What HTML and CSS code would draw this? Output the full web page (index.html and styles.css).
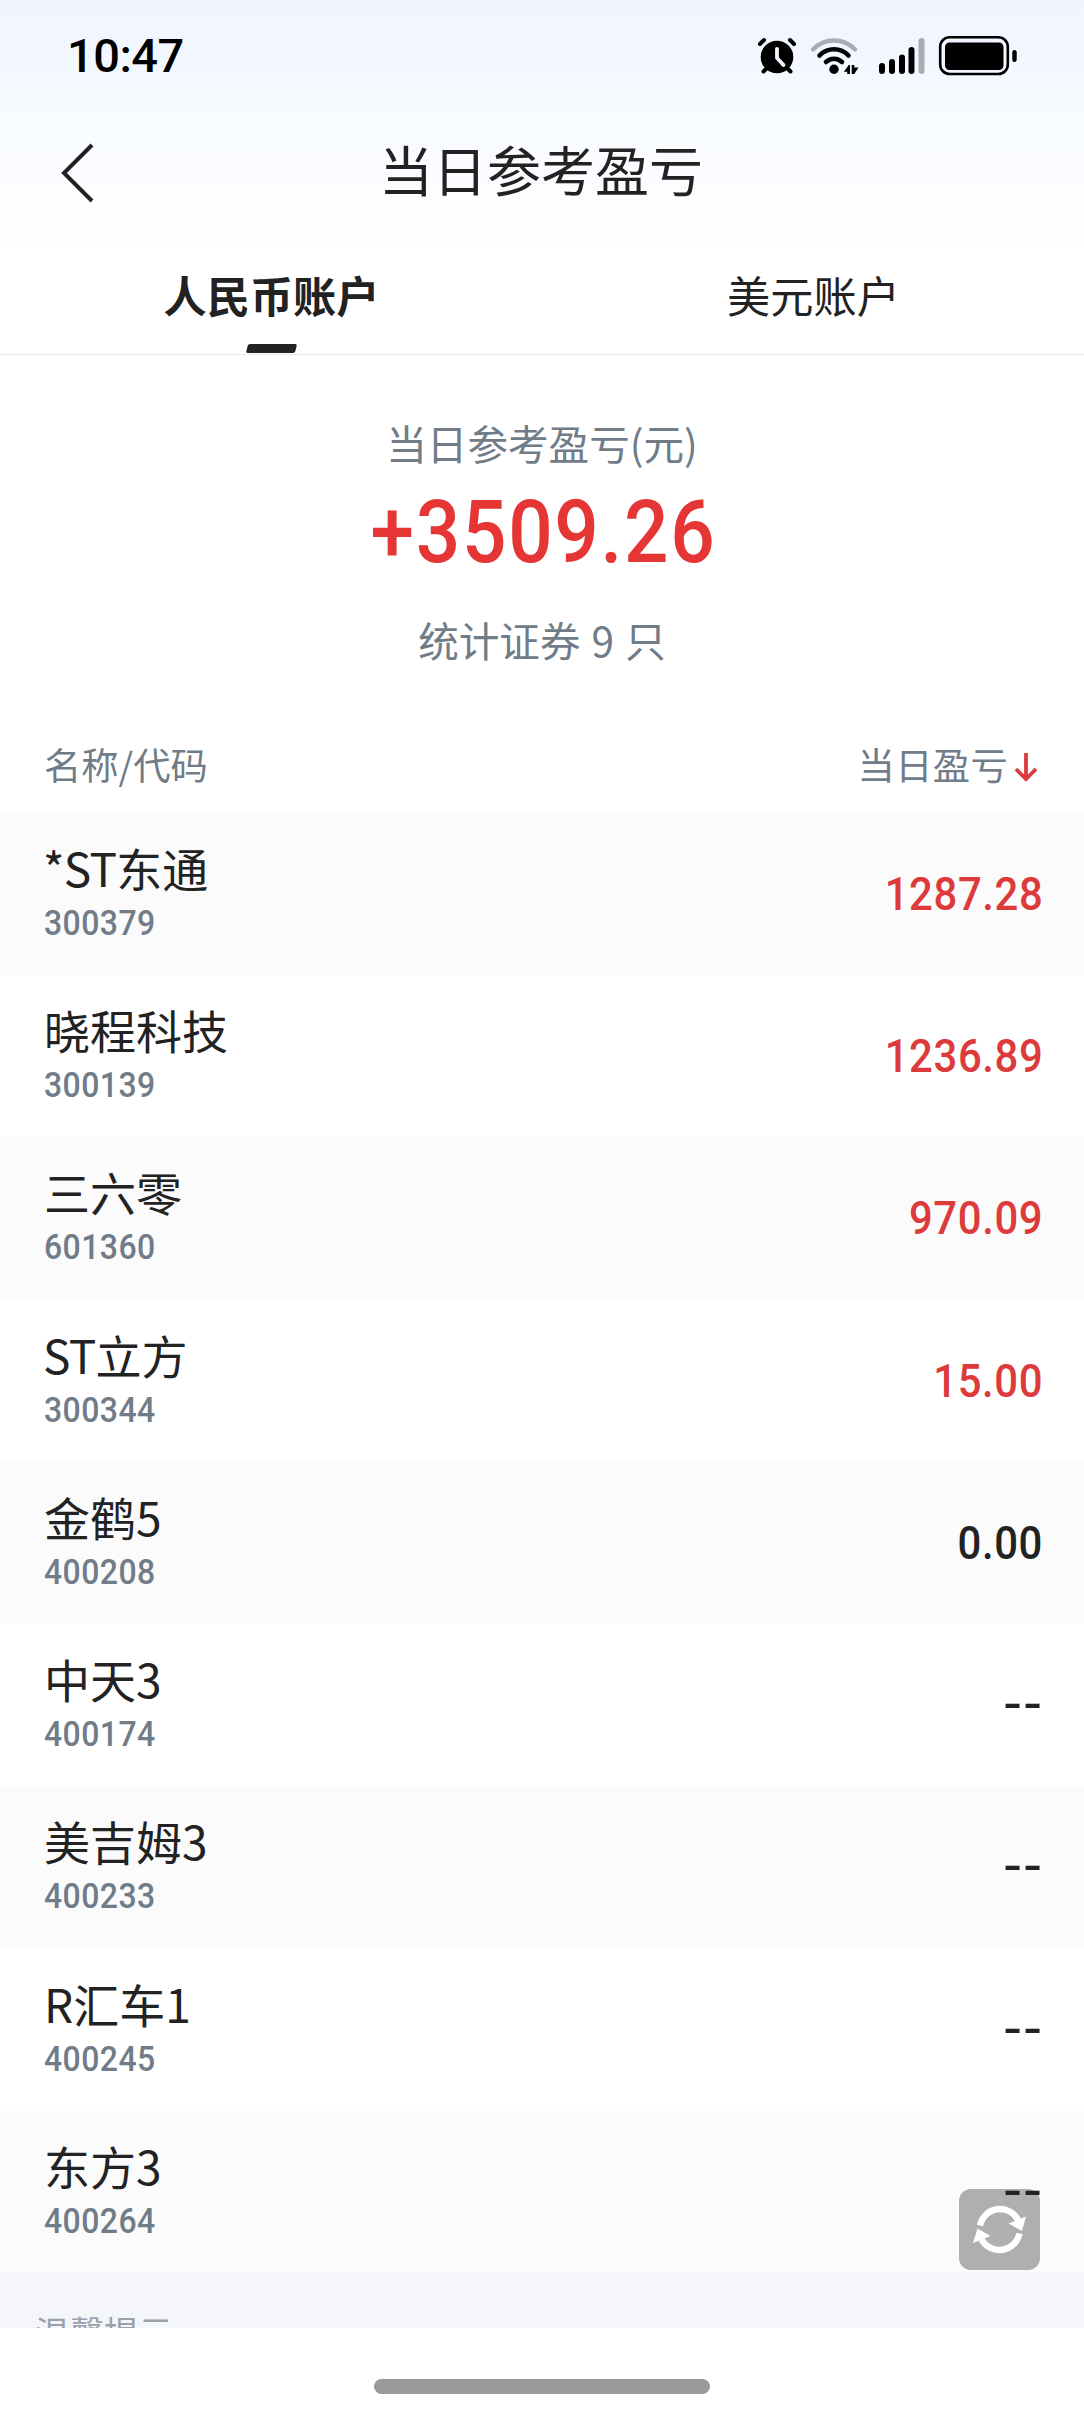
FILE: index.html
```html
<!DOCTYPE html>
<html lang="zh-CN">
<head>
<meta charset="utf-8">
<meta name="viewport" content="width=device-width">
<title>当日参考盈亏</title>
<link rel="stylesheet" href="styles.css">
</head>
<body>
<div class="screen">
  <header class="top">
    <div class="status">
      <span class="time">10:47</span>
      <svg class="status-icons" width="264" height="44" viewBox="756 34 264 44" fill="none" stroke="#000" stroke-linecap="round">
        <circle cx="777" cy="57" r="16.3" fill="#000" stroke="none"/>
        <path d="M760 44l4-4M794 44l-4-4M763.5 71.5l4-4M790.500 71.500l-4-4" stroke-width="4"/>
        <path d="M777 49v9l6.500 7" stroke="#f3f7ff" stroke-width="3.800" stroke-linejoin="round"/>
        <path d="M813 49.500a29 29 0 0 1 42 0" stroke="#a9acb5" stroke-width="4.400"/>
        <path d="M819.500 55.500a20 20 0 0 1 29 0M826 62a11.500 11.500 0 0 1 16 0" stroke-width="4.600"/>
        <circle cx="834" cy="69.300" r="4.700" fill="#000" stroke="none"/>
        <path d="M850 65v9h-2.800v-2.300H843.800l5-6.700zM851.700 65h2.600v2.500h4.200l-4.200 6.500h-2.600z" fill="#000" stroke="none"/>
        <path d="M882 66v5M892 62v9M902 57.500v13.500M911.500 50v21" stroke-width="6"/>
        <path d="M921.500 41v30" stroke="#a9acb5" stroke-width="6"/>
        <rect x="940.200" y="37.200" width="67.600" height="36.800" rx="9.500" stroke-width="2.600"/>
        <rect x="945" y="42.500" width="58.500" height="27.500" rx="4.500" fill="#000" stroke="none"/>
        <path d="M1014.500 52.300v7.400" stroke-width="4.400"/>
      </svg>
    </div>
    <div class="nav">
      <svg class="back" width="34" height="60" viewBox="0 0 34 60" fill="none" stroke="#222" stroke-width="4"><path d="M32 2L4 30l28 28"/></svg>
      <h1 class="title">当日参考盈亏</h1>
    </div>
    <nav class="tabs">
      <div class="tab tab-active">人民币账户</div>
      <div class="tab">美元账户</div>
    </nav>
  </header>
  <main class="content">
    <section class="summary">
      <div class="summary-label">当日参考盈亏(元)</div>
      <div class="total">+3509.26</div>
      <div class="count">统计证券 9 只</div>
    </section>
    <div class="list-head">
      <span>名称/代码</span>
      <span class="sort">当日盈亏<svg width="24" height="30" viewBox="0 0 24 30" fill="none" stroke="#dd3a3c" stroke-width="3.800"><path d="M12 1v26M2 17l10 10 10-10"/></svg></span>
    </div>
    <ul class="list">
      <li class="row"><div><div class="name"><span class="latin">*ST</span>东通</div><div class="code">300379</div></div><div class="value up">1287.28</div></li>
      <li class="row"><div><div class="name">晓程科技</div><div class="code">300139</div></div><div class="value up">1236.89</div></li>
      <li class="row"><div><div class="name">三六零</div><div class="code">601360</div></div><div class="value up">970.09</div></li>
      <li class="row"><div><div class="name"><span class="latin">ST</span>立方</div><div class="code">300344</div></div><div class="value up">15.00</div></li>
      <li class="row"><div><div class="name">金鹤5</div><div class="code">400208</div></div><div class="value">0.00</div></li>
      <li class="row"><div><div class="name">中天3</div><div class="code">400174</div></div><div class="value none">--</div></li>
      <li class="row"><div><div class="name">美吉姆3</div><div class="code">400233</div></div><div class="value none">--</div></li>
      <li class="row"><div><div class="name">R汇车1</div><div class="code">400245</div></div><div class="value none">--</div></li>
      <li class="row"><div><div class="name">东方3</div><div class="code">400264</div></div><div class="value none">--</div></li>
    </ul>
    <div class="tips">温馨提示</div>
    <div class="refresh">
      <svg width="81" height="81" viewBox="0 0 81 81">
        <path d="M21 36.500A20.500 20.500 0 0 1 59.500 31.500M60.500 44.500A20.500 20.500 0 0 1 22.500 50.500" fill="none" stroke="#fff" stroke-width="6.400"/>
        <path d="M67 27.500L63 42 49.500 34.500zM14 54L18.500 39.500 31.500 47z" fill="#fff"/>
      </svg>
    </div>
  </main>
  <footer class="home"><span class="home-bar"></span></footer>
</div>
</body>
</html>
```

FILE: styles.css
```css
* { box-sizing: border-box; }
body { margin: 0; background: #fff; }
.screen {
  display: flex;
  flex-direction: column;
  width: 1084px;
  height: 2412px;
  overflow: hidden;
  background: #fff;
  color: #222;
  font-family: "Noto Sans CJK SC", sans-serif;
}
.top {
  height: 355px;
  border-bottom: 1px solid #e9e9e9;
  background: linear-gradient(#f1f5ff 0, #f2f6ff 48px, #f7fbff 110px, #fbfcff 180px, #fefefe 215px, #fff 260px);
}
.status {
  display: flex;
  align-items: center;
  justify-content: space-between;
  height: 112px;
  padding: 0 64px 0 67px;
}
.time {
  color: #000;
  font: 500 47px/56px Roboto, sans-serif;
  letter-spacing: -.5px;
}
.nav {
  display: grid;
  grid-template-columns: 160px 1fr 160px;
  align-items: center;
  height: 118px;
}
.back { margin: 4px 0 0 60px; }
.title {
  margin: 0 2px 5px 0;
  font-size: 54px;
  font-weight: 400;
  line-height: 80px;
  text-align: center;
}
.tabs { display: grid; grid-template-columns: 1fr 1fr; height: 124px; }
.tab {
  display: flex;
  flex-direction: column;
  align-items: center;
  justify-content: space-between;
  padding: 34px 0 1px 1px;
  font-size: 43.2px;
  line-height: 60px;
}
.tab-active { font-weight: 700; }
.tab-active::after {
  content: "";
  width: 49px;
  height: 9px;
  border-radius: 2px;
  background: #222;
  transform: skewX(-14deg);
}
.content {
  position: relative;
  height: 1973px;
  overflow: hidden;
}
.summary {
  height: 355px;
  padding-top: 58px;
  color: #707c87;
  font-size: 40.6px;
  line-height: 60px;
  text-align: center;
}
.total {
  height: 100px;
  margin: 9px 0 0 3px;
  color: #e63535;
  font: 500 87px/100px Roboto, sans-serif;
  letter-spacing: 1.9px;
  transform: scaleX(.9);
}
.count { margin-top: 28px; word-spacing: 2px; }
.list-head {
  display: flex;
  justify-content: space-between;
  align-items: center;
  height: 103px;
  padding: 5px 46px 0 44px;
  color: #707c87;
  font-size: 37.3px;
  line-height: 54px;
}
.sort { display: flex; align-items: center; gap: 6px; letter-spacing: .3px; }
.sort svg { margin-top: 5px; }
.list {
  display: grid;
  grid-template-rows: repeat(9, 1fr);
  height: 1460px;
  margin: 0;
  padding: 0;
  list-style: none;
}
.row {
  display: flex;
  justify-content: space-between;
  padding: 22px 41px 0 44px;
}
.row:nth-child(odd) { background: #fbfbfb; }
.name { height: 64px; font-size: 46px; line-height: 64px; }
.latin { margin-left: -1px; letter-spacing: -.7px; }
.code {
  color: #707c87;
  font: 500 35.5px/48px Roboto, sans-serif;
  letter-spacing: .5px;
  transform: scaleX(.9);
  transform-origin: left;
}
.value {
  position: relative;
  z-index: 2;
  height: 118px;
  font: 500 46.5px/118px Roboto, sans-serif;
  letter-spacing: .7px;
  transform: scaleX(.9);
  transform-origin: right;
}
.up { color: #dc3a3b; }
.none {
  font: 400 53px/113px "DejaVu Sans", sans-serif;
  letter-spacing: .9px;
  transform: none;
}
.tips {
  height: 55px;
  padding: 33px 0 0 35px;
  background: #f4f6fa;
  color: #9ba1aa;
  font-size: 34.5px;
  line-height: 50px;
}
.refresh {
  position: absolute;
  right: 44px;
  bottom: 58px;
  width: 81px;
  height: 81px;
  border-radius: 12px;
  background: #afafaf;
}
.refresh svg { display: block; }
.home { display: flex; justify-content: center; padding-top: 51px; }
.home-bar { width: 336px; height: 15px; border-radius: 8px; background: #999; }
```
